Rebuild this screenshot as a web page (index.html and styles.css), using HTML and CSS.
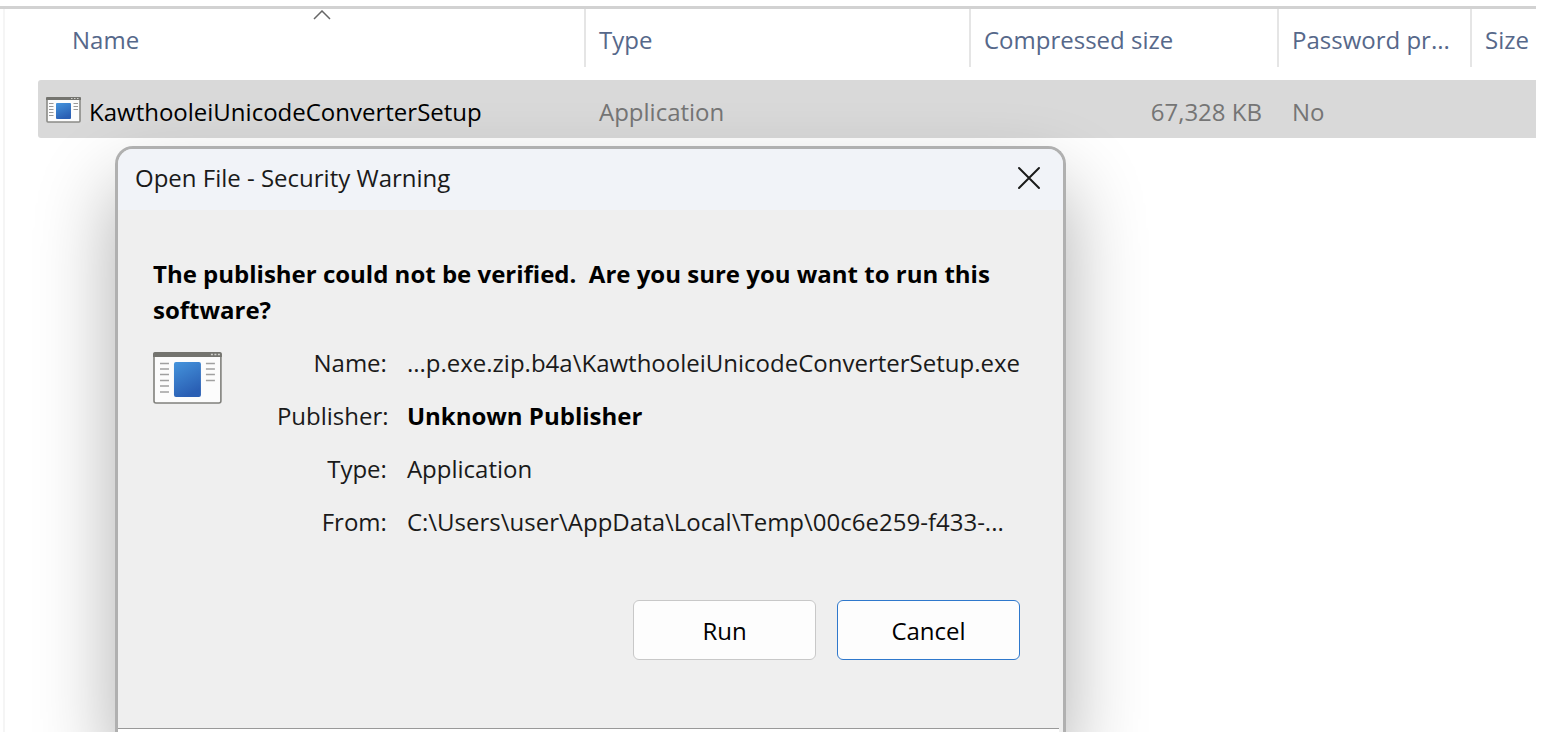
FILE: index.html
```html
<!DOCTYPE html>
<html lang="en">
<head>
    <meta charset="UTF-8">
    <meta name="viewport" content="width=device-width, initial-scale=1.0">
    <title>Open File - Security Warning</title>
    <link rel="stylesheet" href="styles.css">
</head>
<body>
    <svg class="defs" width="0" height="0" aria-hidden="true">
        <defs>
            <linearGradient id="blue" x1="0" y1="0" x2="0.4" y2="1">
                <stop offset="0" stop-color="#4594dc"/>
                <stop offset="1" stop-color="#2a5fb4"/>
            </linearGradient>
        </defs>
    </svg>

    <div class="explorer">
        <svg class="sort" viewBox="0 0 18 10" aria-hidden="true"><path d="M1 9l8-8 8 8" fill="none" stroke="#666" stroke-width="1.5"/></svg>
        <table class="files">
            <thead>
                <tr>
                    <th class="col-name">Name</th>
                    <th class="col-type">Type</th>
                    <th class="col-packed">Compressed size</th>
                    <th class="col-pass">Password pr...</th>
                    <th>Size</th>
                </tr>
            </thead>
            <tbody>
                <tr>
                    <td class="file">
                        <div class="file-name">
                            <svg class="small-icon" viewBox="0 0 35 26" aria-hidden="true">
                                <rect x="1" y="1" width="33" height="24" rx="1" fill="#fcfcfc" stroke="#8a8a86" stroke-width="1.6"/>
                                <path d="M0 3V1q0-1 1-1h33q1 0 1 1v2z" fill="#74746f"/>
                                <path d="M25 1.500h1.500M28 1.500h1.500M31 1.500h1.500" stroke="#d0d0cc" stroke-width="1.2"/>
                                <rect x="10" y="6" width="15" height="16" rx="1" fill="url(#blue)"/>
                                <path d="M3 6.500h4.500M3 9.500h4.500M3 12.500h4.500M3 15.500h4.500M3 18.500h4.500M27.500 6.500h4.500M27.500 9.500h4.500M27.500 12.500h4.500" stroke="#999"/>
                            </svg>
                            <span>KawthooleiUnicodeConverterSetup</span>
                        </div>
                    </td>
                    <td>Application</td>
                    <td class="number">67,328 KB</td>
                    <td>No</td>
                    <td></td>
                </tr>
            </tbody>
        </table>
    </div>

    <div class="dialog" role="dialog" aria-labelledby="title">
        <div class="titlebar">
            <span id="title">Open File - Security Warning</span>
            <button class="close" type="button" aria-label="Close">
                <svg width="24" height="24" viewBox="0 0 24 24"><path d="M2 2l20 20M22 2L2 22" stroke="#1a1a1a" stroke-width="2" stroke-linecap="round"/></svg>
            </button>
        </div>
        <div class="content">
            <h1>The publisher could not be verified.&nbsp; Are you sure you want to run this software?</h1>
            <div class="info">
                <svg class="big-icon" viewBox="0 0 70 53" aria-hidden="true">
                    <rect x="1" y="1" width="67" height="50" rx="2" fill="#fcfcfc" stroke="#80807c" stroke-width="1.6"/>
                    <path d="M0 5V2q0-2 2-2h65q2 0 2 2v3z" fill="#74746f"/>
                    <path d="M58 2.500h2M61.500 2.500h2M65 2.500h2" stroke="#d0d0cc" stroke-width="1.5"/>
                    <rect x="21" y="10" width="27" height="35" rx="2" fill="url(#blue)"/>
                    <path d="M7 11.500h9M7 17h9M7 22.500h9M7 28.500h9M7 34h9M7 40h9M53 11.500h9M53 17h9M53 22.500h9M53 28.500h9" stroke="#a0a0a0" stroke-width="1.6"/>
                </svg>
                <dl>
                    <dt>Name:</dt>
                    <dd>...p.exe.zip.b4a\KawthooleiUnicodeConverterSetup.exe</dd>
                    <dt>Publisher:</dt>
                    <dd class="bold">Unknown Publisher</dd>
                    <dt>Type:</dt>
                    <dd>Application</dd>
                    <dt>From:</dt>
                    <dd>C:\Users\user\AppData\Local\Temp\00c6e259-f433-...</dd>
                </dl>
            </div>
            <div class="buttons">
                <button type="button">Run</button>
                <button type="button" class="default">Cancel</button>
            </div>
        </div>
        <div class="footer"></div>
    </div>
</body>
</html>
```
FILE: styles.css
```css
* {
    box-sizing: border-box;
}
body {
    font-family: "Open Sans", "Noto Sans", sans-serif;
    font-size: 24px;
    margin: 0;
    padding: 6px 6px 0 0;
    height: 100vh;
    position: relative;
    overflow: hidden;
    background-color: #fff;
}
.defs {
    position: absolute;
}
.explorer {
    height: 100%;
    padding-left: 34px;
    border-top: 3px solid #d2d2d2;
    position: relative;
}
.explorer::before {
    content: "";
    position: absolute;
    left: 3px;
    top: 0;
    bottom: 0;
    width: 2px;
    background-color: #f5f5f5;
}
.sort {
    position: absolute;
    left: 313px;
    top: 1px;
    width: 18px;
    height: 10px;
}
.files {
    width: 100%;
    border-collapse: separate;
    border-spacing: 0;
    table-layout: fixed;
    padding-left: 4px;
}
.files th {
    height: 58px;
    padding: 2px 0 0 13px;
    border-right: 2px solid #e5e5e5;
    color: #56688a;
    font-weight: normal;
    text-align: left;
    white-space: nowrap;
}
.files th:last-child {
    border-right: none;
}
.files .col-name {
    width: 548px;
    padding-left: 34px;
}
.files .col-type {
    width: 385px;
}
.files .col-packed {
    width: 308px;
}
.files .col-pass {
    width: 193px;
}
.files tbody::before {
    content: "";
    display: block;
    height: 13px;
}
.files td {
    height: 58px;
    padding: 4px 13px 0 13px;
    background-color: #d9d9d9;
    color: #757575;
    white-space: nowrap;
}
.files .file {
    padding-left: 8px;
    border-radius: 3px 0 0 3px;
    color: #000;
}
.file-name {
    display: flex;
    align-items: center;
    gap: 8px;
}
.small-icon {
    width: 35px;
    height: 26px;
    margin-bottom: 2px;
}
.files .number {
    padding-right: 17px;
    text-align: right;
}
.dialog {
    position: absolute;
    left: 115px;
    top: 146px;
    bottom: 0;
    display: flex;
    flex-direction: column;
    width: 951px;
    border: 3px solid #b0b0b0;
    border-bottom: none;
    border-radius: 18px 18px 0 0;
    background-color: #efefef;
    box-shadow: 0 40px 80px rgba(0, 0, 0, 0.32);
    overflow: hidden;
}
.titlebar {
    display: flex;
    justify-content: space-between;
    align-items: center;
    padding: 12px 22px 16px 17px;
    line-height: 33px;
    background-color: #f1f3f8;
    color: #1a1a1a;
}
.close {
    display: flex;
    padding: 0;
    border: none;
    background: none;
    cursor: pointer;
}
.content {
    padding: 46px 43px 68px 35px;
}
h1 {
    margin: 0;
    font-size: 24px;
    line-height: 36px;
}
.info {
    display: flex;
    gap: 54px;
    margin-top: 17px;
}
.big-icon {
    width: 70px;
    height: 53px;
    margin-top: 7px;
}
dl {
    display: grid;
    grid-template-columns: 110px 1fr;
    column-gap: 20px;
    margin: 0;
    line-height: 36px;
    row-gap: 17px;
    color: #1a1a1a;
    white-space: nowrap;
}
dt {
    text-align: right;
}
dd {
    margin: 0;
}
.bold {
    color: #000;
    font-weight: bold;
}
.buttons {
    display: flex;
    justify-content: flex-end;
    gap: 21px;
    margin-top: 60px;
}
.buttons button {
    width: 183px;
    height: 60px;
    border: 1px solid #c8c8c8;
    border-radius: 6px;
    background-color: #fdfdfd;
    color: #000;
    font-family: inherit;
    font-size: 24px;
    cursor: pointer;
}
.buttons .default {
    border-color: #2f78cc;
}
.footer {
    flex: 1;
    margin-right: 4px;
    border-top: 1px solid #999;
    background-color: #fff;
}
```
